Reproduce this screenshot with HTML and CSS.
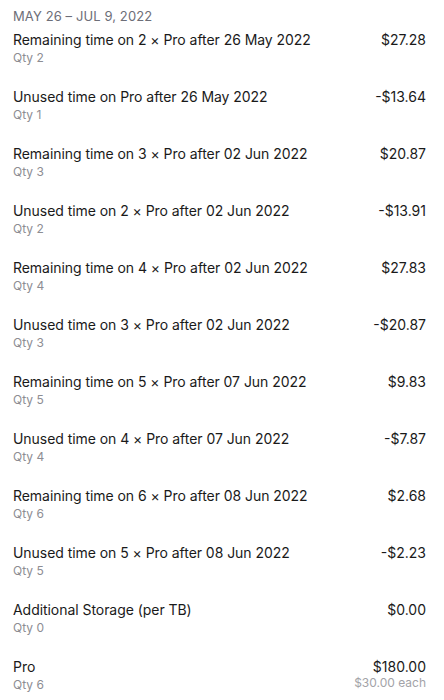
FILE: index.html
```html
<!DOCTYPE html>
<html>
<head>
<meta charset="utf-8">
<link rel="stylesheet" href="styles.css">
</head>
<body>
<div class="invoice">
  <div class="period">MAY 26 – JUL 9, 2022</div>
  <div class="items">
    <div class="item"><div class="info"><div class="title">Remaining time on 2 × Pro after 26 May 2022</div><div class="qty">Qty 2</div></div><div class="amount">$27.28</div></div>
    <div class="item"><div class="info"><div class="title">Unused time on Pro after 26 May 2022</div><div class="qty">Qty 1</div></div><div class="amount">-$13.64</div></div>
    <div class="item"><div class="info"><div class="title">Remaining time on 3 × Pro after 02 Jun 2022</div><div class="qty">Qty 3</div></div><div class="amount">$20.87</div></div>
    <div class="item"><div class="info"><div class="title">Unused time on 2 × Pro after 02 Jun 2022</div><div class="qty">Qty 2</div></div><div class="amount">-$13.91</div></div>
    <div class="item"><div class="info"><div class="title">Remaining time on 4 × Pro after 02 Jun 2022</div><div class="qty">Qty 4</div></div><div class="amount">$27.83</div></div>
    <div class="item"><div class="info"><div class="title">Unused time on 3 × Pro after 02 Jun 2022</div><div class="qty">Qty 3</div></div><div class="amount">-$20.87</div></div>
    <div class="item"><div class="info"><div class="title">Remaining time on 5 × Pro after 07 Jun 2022</div><div class="qty">Qty 5</div></div><div class="amount">$9.83</div></div>
    <div class="item"><div class="info"><div class="title">Unused time on 4 × Pro after 07 Jun 2022</div><div class="qty">Qty 4</div></div><div class="amount">-$7.87</div></div>
    <div class="item"><div class="info"><div class="title">Remaining time on 6 × Pro after 08 Jun 2022</div><div class="qty">Qty 6</div></div><div class="amount">$2.68</div></div>
    <div class="item"><div class="info"><div class="title">Unused time on 5 × Pro after 08 Jun 2022</div><div class="qty">Qty 5</div></div><div class="amount">-$2.23</div></div>
    <div class="item"><div class="info"><div class="title">Additional Storage (per TB)</div><div class="qty">Qty 0</div></div><div class="amount">$0.00</div></div>
    <div class="item"><div class="info"><div class="title">Pro</div><div class="qty">Qty 6</div></div><div class="amount">$180.00<div class="each">$30.00 each</div></div></div>
  </div>
</div>
</body>
</html>
```
FILE: styles.css
```css
html, body {
  margin: 0;
  padding: 0;
  background: #ffffff;
}
body {
  font-family: Inter, "Noto Sans", sans-serif;
  color: #1a1a1a;
}
.invoice {
  padding: 8px 18px 0 13px;
}
.period {
  font-size: 13px;
  line-height: 16px;
  color: #6d6e78;
  letter-spacing: 0.1px;
  margin-bottom: 7px;
}
.items {
  display: flex;
  flex-direction: column;
  gap: 22px;
}
.item {
  display: flex;
  justify-content: space-between;
  align-items: flex-start;
}
.title {
  font-size: 14px;
  line-height: 18px;
  color: #1a1a1a;
  letter-spacing: -0.05px;
}
.qty {
  font-size: 12px;
  line-height: 16px;
  margin-top: 1px;
  color: #8d8d93;
}
.amount {
  font-size: 14px;
  line-height: 18px;
  color: #1a1a1a;
  text-align: right;
}
.each {
  font-size: 12px;
  line-height: 14px;
  color: #a3a3a8;
}
```
